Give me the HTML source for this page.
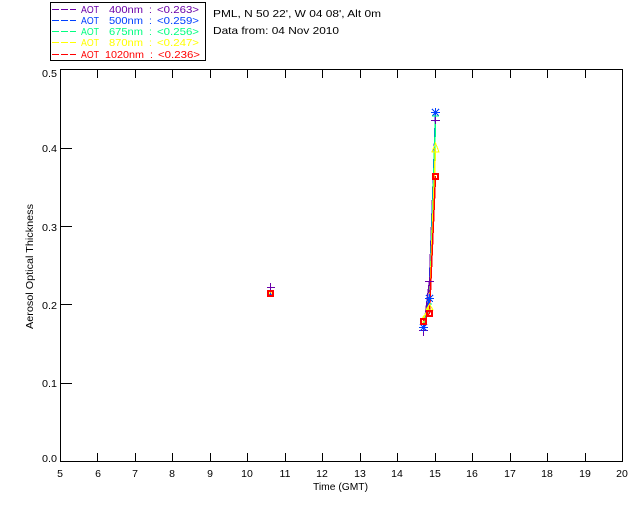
<!DOCTYPE html>
<html><head><meta charset="utf-8"><style>
html,body{margin:0;padding:0;background:#fff;width:640px;height:512px;overflow:hidden}
svg{display:block}
text{font-family:"Liberation Sans",sans-serif;font-size:10.5px;fill:#000}
.a{fill:#6a00a8}.b{fill:#0040ff}.c{fill:#00ff80}.d{fill:#ffff00}.e{fill:#ff0000}
</style></head><body>
<svg width="640" height="512" viewBox="0 0 640 512" xmlns="http://www.w3.org/2000/svg">
<g shape-rendering="crispEdges" fill="none" stroke="#000" stroke-width="1">
<path d="M50.5 2.5H205.5V60.5H50.5Z"/>
<path d="M60.5 69.5H622.5V461.5H60.5Z"/>
<path d="M97.5 461V453M135.5 461V453M172.5 461V453M210.5 461V453M247.5 461V453M285.5 461V453M322.5 461V453M360.5 461V453M397.5 461V453M435.5 461V453M472.5 461V453M510.5 461V453M547.5 461V453M585.5 461V453"/>
<path d="M97.5 70V78M135.5 70V78M172.5 70V78M210.5 70V78M247.5 70V78M285.5 70V78M322.5 70V78M360.5 70V78M397.5 70V78M435.5 70V78M472.5 70V78M510.5 70V78M547.5 70V78M585.5 70V78"/>
<path d="M60 383.5H72M60 304.5H72M60 226.5H72M60 148.5H72"/>
<path stroke="#6a00a8" d="M52 9.5H59M61 9.5H68M70 9.5H76"/>
<path stroke="#0040ff" d="M52 20.5H59M61 20.5H68M70 20.5H76"/>
<path stroke="#00ff80" d="M52 31.5H59M61 31.5H68M70 31.5H76"/>
<path stroke="#ffff00" d="M52 42.5H59M61 42.5H68M70 42.5H76"/>
<path stroke="#ff0000" d="M52 54.5H59M61 54.5H68M70 54.5H76"/>
</g>
<g>
<text class="a" x="81" y="13" textLength="18" lengthAdjust="spacingAndGlyphs">AOT</text><text class="a" x="109" y="13" textLength="34" lengthAdjust="spacingAndGlyphs">400nm</text><text class="a" x="149" y="13">:</text><text class="a" x="157" y="13" textLength="42" lengthAdjust="spacingAndGlyphs">&lt;0.263&gt;</text>
<text class="b" x="81" y="24" textLength="18" lengthAdjust="spacingAndGlyphs">AOT</text><text class="b" x="109" y="24" textLength="34" lengthAdjust="spacingAndGlyphs">500nm</text><text class="b" x="149" y="24">:</text><text class="b" x="157" y="24" textLength="42" lengthAdjust="spacingAndGlyphs">&lt;0.259&gt;</text>
<text class="c" x="81" y="35" textLength="18" lengthAdjust="spacingAndGlyphs">AOT</text><text class="c" x="109" y="35" textLength="34" lengthAdjust="spacingAndGlyphs">675nm</text><text class="c" x="149" y="35">:</text><text class="c" x="157" y="35" textLength="42" lengthAdjust="spacingAndGlyphs">&lt;0.256&gt;</text>
<text class="d" x="81" y="46" textLength="18" lengthAdjust="spacingAndGlyphs">AOT</text><text class="d" x="109" y="46" textLength="34" lengthAdjust="spacingAndGlyphs">870nm</text><text class="d" x="149" y="46">:</text><text class="d" x="157" y="46" textLength="42" lengthAdjust="spacingAndGlyphs">&lt;0.247&gt;</text>
<text class="e" x="81" y="58" textLength="18" lengthAdjust="spacingAndGlyphs">AOT</text><text class="e" x="105" y="58" textLength="39" lengthAdjust="spacingAndGlyphs">1020nm</text><text class="e" x="150" y="58">:</text><text class="e" x="158" y="58" textLength="42" lengthAdjust="spacingAndGlyphs">&lt;0.236&gt;</text>
<text x="213" y="17" textLength="168" lengthAdjust="spacingAndGlyphs">PML, N 50 22', W 04 08', Alt 0m</text>
<text x="213" y="34" textLength="126" lengthAdjust="spacingAndGlyphs">Data from: 04 Nov 2010</text>
<text x="42" y="77" textLength="15" lengthAdjust="spacingAndGlyphs">0.5</text>
<text x="42" y="152" textLength="15" lengthAdjust="spacingAndGlyphs">0.4</text>
<text x="42" y="231" textLength="15" lengthAdjust="spacingAndGlyphs">0.3</text>
<text x="42" y="309" textLength="15" lengthAdjust="spacingAndGlyphs">0.2</text>
<text x="42" y="387" textLength="15" lengthAdjust="spacingAndGlyphs">0.1</text>
<text x="42" y="462" textLength="15" lengthAdjust="spacingAndGlyphs">0.0</text>
<g text-anchor="middle">
<text x="60" y="477">5</text><text x="98" y="477">6</text><text x="135" y="477">7</text><text x="172" y="477">8</text><text x="210" y="477">9</text><text x="247" y="477">10</text><text x="285" y="477">11</text><text x="322" y="477">12</text><text x="360" y="477">13</text><text x="397" y="477">14</text><text x="435" y="477">15</text><text x="472" y="477">16</text><text x="510" y="477">17</text><text x="547" y="477">18</text><text x="585" y="477">19</text><text x="622" y="477">20</text>
</g>
<text x="313" y="490" textLength="55" lengthAdjust="spacingAndGlyphs">Time (GMT)</text>
<text transform="translate(33 329) rotate(-90)" textLength="125" lengthAdjust="spacingAndGlyphs">Aerosol Optical Thickness</text>
</g>
<g fill="none" stroke-width="1.5" shape-rendering="crispEdges">
<path stroke="#6a00a8" d="M423.5 330L429.5 281L435.5 120"/>
<path stroke="#0040ff" d="M423.5 327L429.5 298L435.5 113"/>
<path stroke="#00ff80" d="M423.5 323L429.5 308L435.5 122"/>
<path stroke="#ffff00" d="M423.5 318L429.5 306L435.5 148"/>
<path stroke="#ff0000" d="M423.5 321L429.5 313L435.5 176"/>
</g>
<g fill="none" stroke-width="1" shape-rendering="crispEdges">
<path stroke="#6a00a8" d="M267 287.5H275M270.5 283V291M419 330.5H428M423.5 326V336M425 281.5H434M429.5 277V286M431 120.5H440M435.5 116V124"/>
<path stroke="#0040ff" d="M431 112.5H440M435.5 108V117M432 109L439 116M439 109L432 116M425 298.5H434M429.5 294V303M426 295L433 302M433 295L426 302M419 327.5H428M423.5 323V332M420 324L427 331M427 324L420 331M268 294.5H273M270.5 292V297"/>
<path stroke="#00ff80" d="M432 116H439M429 304H432M422 318H426M269 296.5H272"/>
<path stroke="#ffff00" d="M435.5 143L432 152H439ZM429.5 304L426 310H433ZM423.5 316L421 322H426ZM270.5 291L268 296H273Z"/>
</g>
<path fill="#ff0000" fill-rule="evenodd" shape-rendering="crispEdges" d="M432 173h7v7h-7ZM434 175v3h3v-3ZM426 310h7v7h-7ZM428 312v3h3v-3ZM420 318h7v7h-7ZM422 320v3h3v-3ZM267 290h7v7h-7ZM269 292v3h3v-3Z"/>
</svg>
</body></html>
